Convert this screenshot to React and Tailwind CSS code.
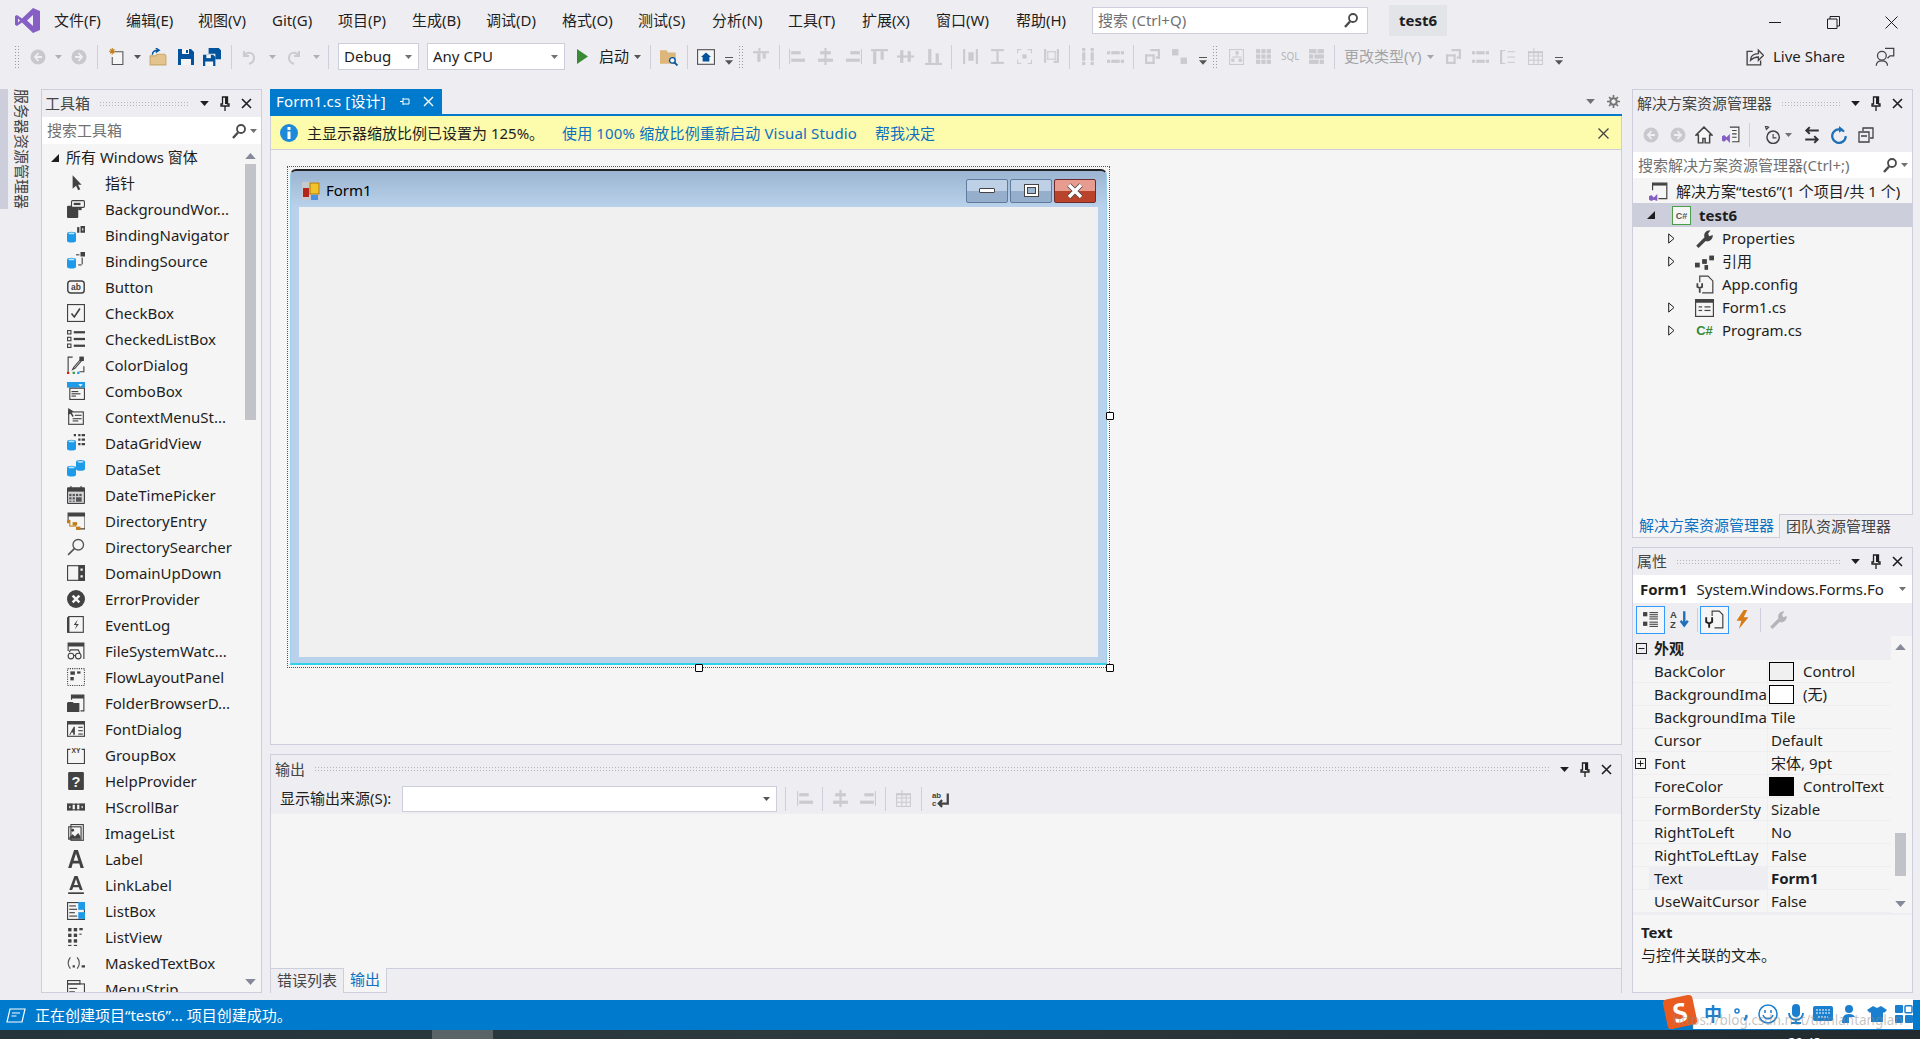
import React from "react";

// shared colours: bg #eeeef2, panel #f5f5f5, border #cccedb, accent #007acc
const DK = "#424242";
const BL = "#1e9be8";
const GR = "#cbcbcf";
const OR = "#c27d1a";

const Svg = ({ s = 18, children, className = "" }) => (
  <svg width={s} height={s} viewBox="0 0 16 16" className={`shrink-0 ${className}`}>
    {children}
  </svg>
);

const Rects = ({ r, fill = DK }) =>
  r.map(([x, y, w, h], i) => <rect key={i} x={x} y={y} width={w} height={h} fill={fill} />);

const Cyl = ({ x = 0, y = 6 }) => (
  <g transform={`translate(${x} ${y})`}>
    <path d="M0 1.6a4 1.6 0 0 1 8 0v6.4a4 1.6 0 0 1-8 0z" fill={BL} />
    <ellipse cx="4" cy="1.6" rx="2.8" ry="0.8" fill="#bfe3fa" />
  </g>
);

const Box = ({ x, y, w, h, c = DK, dash }) => (
  <rect x={x + 0.5} y={y + 0.5} width={w - 1} height={h - 1} fill="none" stroke={c} strokeDasharray={dash} />
);

// toolbox icons
const TOOLBOX_ICONS = {
  pointer: <path d="M5 1v12l3-2.6 2 4 1.8-.8-2-4H13z" fill={DK} />,
  worker: (
    <>
      <rect x="0" y="5" width="10" height="11" rx="1" fill={DK} />
      <rect x="4" y="0.5" width="11.5" height="6" rx="1" fill="#f5f5f5" stroke={DK} />
      <rect x="6" y="2.5" width="6" height="2" fill={DK} />
      <Rects r={[[10, 7, 3, 2]]} />
    </>
  ),
  bindnav: (
    <>
      <Cyl y={5} />
      <Rects r={[[9, 1, 2, 5], [12, 0, 4, 6]]} />
      <rect x="13.5" y="2" width="1" height="2" fill="#f5f5f5" />
    </>
  ),
  bindsrc: (
    <>
      <Cyl y={5} />
      <Rects r={[[12, 0, 4, 4], [8, 2, 3, 1], [13, 5, 1, 6], [10, 11, 3, 1]]} />
    </>
  ),
  button: (
    <>
      <rect x="0.7" y="2.7" width="14.6" height="10.6" rx="2.5" fill="none" stroke={DK} strokeWidth="1.3" />
      <text x="8" y="10.5" textAnchor="middle" fontSize="7.5" fontWeight="700" fill={DK} fontFamily="Liberation Sans, sans-serif">ab</text>
    </>
  ),
  checkbox: (
    <>
      <Box x={0} y={0} w={16} h={16} />
      <path d="M4 8.5l2.5 3L11.5 4" fill="none" stroke={DK} strokeWidth="1.5" />
    </>
  ),
  checkedlist: (
    <>
      <Box x={0} y={0} w={4} h={4} />
      <Box x={0} y={6} w={4} h={4} />
      <Box x={0} y={12} w={4} h={4} />
      <Rects r={[[6, 1, 10, 2], [6, 7, 10, 2], [6, 13, 10, 2]]} />
    </>
  ),
  color: (
    <>
      <path d="M5 1H1v13M15 9v5h-4" fill="none" stroke={DK} />
      <path d="M13 2l-7 8-1 2 2-1 7-8z" fill="#f5f5f5" stroke={DK} />
      <rect x="11" y="0.5" width="4" height="4" fill={DK} />
      <Rects r={[[0, 14, 2, 2]]} fill="#e51400" />
      <Rects r={[[5, 14, 2, 2]]} fill="#339933" />
      <Rects r={[[9, 14, 2, 2]]} fill={BL} />
    </>
  ),
  combo: (
    <>
      <rect x="0" y="0" width="16" height="5" fill={BL} />
      <path d="M10 2h4l-2 2z" fill="#fff" />
      <Box x={2} y={5} w={14} h={11} />
      <Rects r={[[4, 8, 6, 1], [4, 10, 8, 1], [4, 12, 4, 1]]} />
    </>
  ),
  context: (
    <>
      <Box x={1} y={3} w={14} h={12} />
      <path d="M1 0l5 3-2 1 2 3-1 1-2-3-2 1z" fill={DK} />
      <Rects r={[[7, 6, 6, 1], [5, 9, 8, 1], [5, 11, 5, 1]]} />
    </>
  ),
  grid: (
    <>
      <Cyl y={5} />
      <Rects r={[[6, 0, 2, 2], [10, 0, 2, 2], [13, 0, 3, 2], [10, 4, 2, 2], [13, 4, 3, 2], [10, 8, 2, 2], [13, 8, 3, 2]]} />
    </>
  ),
  dataset: (
    <>
      <Cyl x={8} y={0} />
      <Cyl x={0} y={5} />
    </>
  ),
  date: (
    <>
      <rect x="0" y="1" width="16" height="15" rx="1" fill={DK} />
      <rect x="1" y="5" width="14" height="10" fill="#d5d5d8" />
      <Rects r={[[3, 0, 1, 3], [12, 0, 1, 3]]} />
      <Rects r={[[2, 7, 2, 2], [5, 7, 2, 2], [8, 7, 2, 2], [11, 7, 2, 2], [2, 10, 2, 2], [5, 10, 2, 2], [2, 13, 2, 1], [5, 13, 2, 1], [8, 10, 5, 4]]} fill="#555" />
    </>
  ),
  direntry: (
    <>
      <path d="M1 8V1h15v14H9" fill="none" stroke={DK} />
      <rect x="1" y="1" width="15" height="3" fill={DK} />
      <Rects r={[[0, 7, 3, 3], [5, 9, 4, 3], [8, 13, 4, 3], [2, 10, 1, 3], [3, 12, 5, 1]]} fill={OR} />
    </>
  ),
  dirsearch: (
    <>
      <circle cx="10" cy="6" r="4.7" fill="none" stroke="#555" strokeWidth="1.2" />
      <path d="M6.5 9.5L1 15" stroke="#555" strokeWidth="1.5" />
    </>
  ),
  updown: (
    <>
      <Box x={0} y={1} w={16} h={14} />
      <rect x="10" y="1" width="6" height="14" fill={DK} />
      <Rects r={[[12, 4, 2, 2], [12, 10, 2, 2]]} fill="#f5f5f5" />
    </>
  ),
  error: (
    <>
      <circle cx="8" cy="8" r="8" fill={DK} />
      <path d="M5 5l6 6M11 5l-6 6" stroke="#f5f5f5" strokeWidth="2.2" />
    </>
  ),
  eventlog: (
    <>
      <rect x="1.5" y="0.5" width="13" height="14" fill="none" stroke={DK} />
      <Rects r={[[0, 1, 2, 14]]} />
      <path d="M9.5 3L6 8h2.5L7 12l3.5-5H8z" fill={DK} />
    </>
  ),
  watcher: (
    <>
      <path d="M1 8V1h14v14" fill="none" stroke={DK} />
      <rect x="1" y="1" width="14" height="3" fill={DK} />
      <circle cx="3.5" cy="12.5" r="2.5" fill="none" stroke={DK} />
      <circle cx="10" cy="12.5" r="2.5" fill="none" stroke={DK} />
      <path d="M6 12h1.5M2 9l1-2h7l1.5 3" fill="none" stroke={DK} />
    </>
  ),
  flow: (
    <>
      <Box x={0} y={0} w={16} h={16} dash="1 1" />
      <Rects r={[[3, 3, 4, 3], [9, 3, 3, 2], [3, 8, 3, 3]]} />
    </>
  ),
  folder: (
    <>
      <path d="M4 5V1h11v14h-3" fill="none" stroke={DK} />
      <rect x="4" y="1" width="11" height="3" fill={DK} />
      <path d="M0 8l1-1h4l1 1h5v8H0z" fill={DK} />
    </>
  ),
  font: (
    <>
      <Box x={0} y={1} w={16} h={14} />
      <rect x="0" y="1" width="16" height="3" fill={DK} />
      <path d="M2 13l4-7h1v7H5.500v-2H4l-1 2z" fill={DK} />
      <Rects r={[[10, 6, 4, 1], [10, 9, 4, 1], [10, 12, 4, 1]]} />
    </>
  ),
  group: (
    <>
      <path d="M3 3H.5v12.5h15V3H13" fill="none" stroke={DK} />
      <text x="8" y="6" textAnchor="middle" fontSize="6" fontWeight="700" fill={DK} fontFamily="Liberation Sans, sans-serif">XY</text>
    </>
  ),
  help: (
    <>
      <rect x="1" y="0" width="14" height="16" rx="1" fill={DK} />
      <text x="8" y="13" textAnchor="middle" fontSize="13" fontWeight="700" fill="#f5f5f5" fontFamily="Liberation Sans, sans-serif">?</text>
    </>
  ),
  hscroll: (
    <>
      <Box x={0} y={5} w={16} h={6} />
      <Rects r={[[0, 5, 5, 6], [11, 5, 5, 6], [7, 5, 2, 6]]} />
      <Rects r={[[2, 7, 1, 2], [13, 7, 1, 2]]} fill="#f5f5f5" />
    </>
  ),
  imagelist: (
    <>
      <Box x={3} y={0} w={12} h={15} />
      <Box x={1} y={2} w={12} h={12} />
      <path d="M2 12l3-3 2 2 3-3 2 3v2H2z" fill={DK} />
      <circle cx="5" cy="5.5" r="1.3" fill={DK} />
    </>
  ),
  label: <path d="M1 16L6.3 0h3.4L15 16h-3l-1.1-4H5.1L4 16zM5.9 9.5h4.2L8 3z" fill={DK} />,
  link: (
    <>
      <path d="M2 12.5L6.6 0h2.8L14 12.5h-2.6L10.5 10h-5l-.9 2.5zM6.2 8h3.6L8 2.600z" fill={DK} />
      <rect x="1" y="14.5" width="14" height="1.5" fill={DK} />
    </>
  ),
  listbox: (
    <>
      <Box x={0} y={0} w={16} h={16} />
      <Rects r={[[2, 3, 6, 1], [2, 6, 7, 1], [2, 9, 5, 1], [2, 12, 7, 1]]} />
      <Rects r={[[10, 0, 6, 7], [10, 9, 6, 6]]} fill={BL} />
    </>
  ),
  listview: <Rects r={[[1, 0, 3, 3], [6, 0, 3, 3], [11, 0, 3, 2], [1, 5, 3, 3], [6, 5, 3, 3], [11, 5, 2, 1], [1, 10, 3, 3], [6, 10, 3, 3], [1, 15, 3, 1], [6, 15, 3, 1]]} />,
  masked: (
    <>
      <path d="M3 3C0.500 6 0.500 10 3 13M9 3c2.500 3 2.500 7 0 10" fill="none" stroke="#555" strokeWidth="1.2" />
      <Rects r={[[5, 10, 2, 2], [13, 10, 3, 2]]} />
    </>
  ),
  menu: (
    <>
      <rect x="0.500" y="0.500" width="11" height="3" fill="none" stroke={DK} />
      <Box x={0} y={3} w={16} h={13} />
      <Rects r={[[2, 7, 7, 1], [2, 10, 5, 1]]} />
    </>
  ),
};

const TOOLBOX = [
  ["指针", "pointer"], ["BackgroundWor...", "worker"], ["BindingNavigator", "bindnav"], ["BindingSource", "bindsrc"],
  ["Button", "button"], ["CheckBox", "checkbox"], ["CheckedListBox", "checkedlist"], ["ColorDialog", "color"],
  ["ComboBox", "combo"], ["ContextMenuSt...", "context"], ["DataGridView", "grid"], ["DataSet", "dataset"],
  ["DateTimePicker", "date"], ["DirectoryEntry", "direntry"], ["DirectorySearcher", "dirsearch"], ["DomainUpDown", "updown"],
  ["ErrorProvider", "error"], ["EventLog", "eventlog"], ["FileSystemWatc...", "watcher"], ["FlowLayoutPanel", "flow"],
  ["FolderBrowserD...", "folder"], ["FontDialog", "font"], ["GroupBox", "group"], ["HelpProvider", "help"],
  ["HScrollBar", "hscroll"], ["ImageList", "imagelist"], ["Label", "label"], ["LinkLabel", "link"],
  ["ListBox", "listbox"], ["ListView", "listview"], ["MaskedTextBox", "masked"], ["MenuStrip", "menu"],
];

// disabled toolbar glyphs, all plain bars
const GRAY_ICONS = {
  alignTop: [[1, 3, 15, 2], [5, 5, 3, 8], [10, 5, 3, 5], [6, 0, 2, 3]],
  alignL: [[1, 1, 1, 14], [3, 3, 9, 3], [3, 10, 13, 3]],
  alignC: [[7, 0, 2, 16], [3, 3, 10, 3], [1, 10, 14, 3]],
  alignR: [[15, 1, 1, 14], [5, 3, 9, 3], [1, 10, 13, 3]],
  topA: [[0, 1, 16, 2], [2, 3, 3, 12], [9, 3, 3, 8]],
  midA: [[0, 7, 16, 2], [3, 2, 3, 12], [10, 3, 3, 10]],
  botA: [[0, 14, 16, 2], [3, 1, 3, 13], [10, 5, 3, 9]],
  spaceH: [[1, 1, 2, 14], [13, 1, 2, 14], [6, 4, 5, 8]],
  spaceV: [[2, 1, 12, 2], [2, 13, 12, 2], [7, 3, 2, 10]],
  fit: [[1, 1, 4, 1], [1, 1, 1, 4], [11, 1, 4, 1], [14, 1, 1, 4], [1, 14, 4, 1], [1, 11, 1, 4], [11, 14, 4, 1], [14, 11, 1, 4], [6, 6, 4, 4]],
  zoom: [[1, 1, 2, 13], [13, 1, 2, 13], [4, 3, 8, 1], [4, 10, 8, 1], [4, 3, 1, 8], [11, 3, 1, 8], [10, 12, 4, 2]],
  centerV: [[2, 0, 3, 3], [2, 4, 3, 8], [2, 13, 3, 3], [10, 0, 3, 3], [10, 4, 3, 8], [10, 13, 3, 3]],
  centerH: [[0, 3, 3, 3], [4, 3, 8, 3], [13, 3, 3, 3], [0, 11, 3, 3], [4, 11, 8, 3], [13, 11, 3, 3]],
  front: [[1, 6, 9, 2], [1, 13, 9, 2], [1, 6, 2, 9], [8, 6, 2, 9], [6, 1, 9, 2], [13, 1, 2, 9], [11, 8, 4, 2]],
  back: [[1, 1, 6, 6], [9, 9, 6, 6]],
  chart: [[1, 1, 14, 1], [1, 15, 14, 1], [1, 1, 1, 15], [14, 1, 1, 15], [7, 3, 3, 3], [3, 10, 3, 3], [10, 10, 3, 3], [8, 6, 1, 2], [4, 8, 9, 1]],
  dots: [[1, 1, 4, 4], [6, 1, 4, 4], [11, 1, 4, 4], [1, 6, 4, 4], [6, 6, 4, 4], [11, 6, 4, 4], [1, 11, 4, 4], [6, 11, 4, 4], [11, 11, 4, 4]],
  block: [[1, 1, 7, 4], [9, 1, 6, 4], [1, 6, 4, 4], [6, 6, 9, 4], [1, 11, 9, 4], [11, 11, 4, 4]],
  keyB: [[1, 2, 2, 13], [1, 2, 5, 1], [1, 14, 5, 1], [8, 3, 7, 1], [8, 8, 7, 1], [8, 13, 7, 1]],
  tbl: [[1, 3, 14, 2], [1, 7, 14, 1], [1, 11, 14, 1], [1, 15, 14, 1], [1, 3, 1, 12], [6, 3, 1, 12], [10, 3, 1, 12], [14, 3, 1, 12], [6, 0, 1, 3]],
};

const Gray = ({ n, className = "" }) => (
  <Svg s={17} className={className}>
    <Rects r={GRAY_ICONS[n]} fill={GR} />
  </Svg>
);

const Caret = ({ className = "", c = "#717171", w = 7 }) => (
  <svg width={w} height={Math.round((w * 4) / 7)} viewBox="0 0 7 4" className={`shrink-0 ${className}`}>
    <path d="M0 0h7L3.500 4z" fill={c} />
  </svg>
);

const Sep = ({ className = "" }) => <div className={`h-[24px] w-px shrink-0 bg-[#cccedb] ${className}`} />;

const VGrip = ({ className = "" }) => (
  <div className={`h-[24px] w-[6px] shrink-0 bg-[radial-gradient(#9a9aa0_0.7px,transparent_0.8px)] bg-[length:3px_3px] ${className}`} />
);

const HGrip = ({ className = "" }) => (
  <div className={`h-[6px] bg-[radial-gradient(#b5b6c0_0.7px,transparent_0.8px)] bg-[length:3px_3px] ${className}`} />
);

const Circ = ({ dir, className = "" }) => (
  <Svg s={16} className={className}>
    <circle cx="8" cy="8" r="7.500" fill="#c9c9cd" />
    <path d={dir === "l" ? "M8.500 4L5 8l3.500 4M5.500 8H12" : "M7.500 4L11 8l-3.500 4M10.500 8H4"} fill="none" stroke="#f0f0f2" strokeWidth="1.800" />
  </Svg>
);

const Mag = ({ className = "", s = 16 }) => (
  <Svg s={s} className={className}>
    <circle cx="10" cy="6" r="4" fill="none" stroke="#4a4a4a" strokeWidth="1.800" />
    <path d="M7 9.500L2 15" stroke="#4a4a4a" strokeWidth="2.400" />
  </Svg>
);

const PaneButtons = ({ className = "" }) => (
  <div className={`flex shrink-0 items-center pr-[2px] ${className}`}>
    <Caret c="#1e1e1e" w={9} className="mr-[11px]" />
    <svg width="10" height="15" viewBox="0 0 10 15" className="mr-[11px]">
      <path d="M2.500 1h5v7h1.500v2H1V8h1.500zM5 10v5" fill="none" stroke="#1e1e1e" strokeWidth="1.300" />
      <rect x="5" y="1" width="2.500" height="7" fill="#1e1e1e" />
    </svg>
    <svg width="11" height="11" viewBox="0 0 11 11">
      <path d="M1 1l9 9M10 1l-9 9" stroke="#1e1e1e" strokeWidth="1.600" />
    </svg>
  </div>
);

const MENU = [
  ["文件(F)", "w-[72px]"], ["编辑(E)", "w-[72px]"], ["视图(V)", "w-[74px]"], ["Git(G)", "w-[66px]"], ["项目(P)", "w-[74px]"],
  ["生成(B)", "w-[74px]"], ["调试(D)", "w-[76px]"], ["格式(O)", "w-[76px]"], ["测试(S)", "w-[74px]"], ["分析(N)", "w-[76px]"],
  ["工具(T)", "w-[74px]"], ["扩展(X)", "w-[74px]"], ["窗口(W)", "w-[80px]"], ["帮助(H)", "w-[76px]"],
];

const TitleBar = () => (
  <div className="flex h-[40px] items-center">
    <svg width="25" height="25" viewBox="0 0 25 25" className="ml-[15px] mr-[14px] shrink-0">
      <path d="M18 0l7 3v19l-7 3-11-10.500L2 18l-2-1.200V8L2 7l5 3.500zM18 7l-6 5.500 6 5.500z" fill="#865fc5" />
      <path d="M3 10.500v4l2-2z" fill="#eeeef2" />
    </svg>
    <nav className="flex w-[1038px] shrink-0">
      {MENU.map(([label, w]) => (
        <span key={label} className={`${w} shrink-0 text-[15px]`}>{label}</span>
      ))}
    </nav>
    <div className="flex h-[27px] w-[276px] shrink-0 items-center border border-[#cccedb] bg-white pl-[5px] pr-[8px] text-[15px] text-[#717171]">
      <span>搜索 (Ctrl+Q)</span>
      <Mag className="ml-auto" />
    </div>
    <div className="ml-[21px] flex h-[31px] w-[58px] items-center justify-center bg-[#e2e4e8] text-[15px] font-bold">test6</div>
    <div className="ml-auto flex items-center pr-[0px] pt-[4px]">
      <div className="flex h-[13px] w-[58px] items-center justify-center"><div className="h-px w-[12px] bg-[#1e1e1e]" /></div>
      <div className="flex h-[13px] w-[58px] items-center justify-center">
        <svg width="13" height="13" viewBox="0 0 13 13">
          <path d="M3 3V.5h9.500V10H10M.5 3h9.500v9.500H.5z" fill="none" stroke="#1e1e1e" />
        </svg>
      </div>
      <div className="flex h-[13px] w-[58px] items-center justify-center">
        <svg width="13" height="13" viewBox="0 0 13 13">
          <path d="M.5.500l12 12M12.500.500l-12 12" stroke="#1e1e1e" />
        </svg>
      </div>
    </div>
  </div>
);

const ToolBar = () => (
  <div className="flex h-[49px] items-start">
    <div className="flex h-[33px] w-full items-center">
      <VGrip className="ml-[14px]" />
      <Circ dir="l" className="ml-[10px]" />
      <Caret className="ml-[9px]" c="#b0b0b4" />
      <Circ dir="r" className="ml-[9px]" />
      <Sep className="ml-[10px]" />
      <Svg s={17} className="ml-[10px]">
        <path d="M6 3.500h8v12H4v-7" fill="#f5f5f5" stroke="#555" />
        <path d="M4 0v6M1 3h6M2 1l4 4M6 1L2 5" stroke="#c27d1a" />
      </Svg>
      <Caret className="ml-[9px]" c="#555" />
      <Svg s={18} className="ml-[8px]">
        <path d="M1 7h5l1-1.500h7l1 1.500v8H1z" fill="#e3c48f" stroke="#c9a86a" />
        <path d="M3 6c0-3 2-4 5-4M6 0l3 2-3 2" fill="none" stroke="#00539c" strokeWidth="1.300" />
      </Svg>
      <Svg s={16} className="ml-[11px]">
        <path d="M0 0h13l3 3v13H0z" fill="#00539c" />
        <rect x="4" y="0" width="7" height="5" fill="#f5f5f5" />
        <rect x="8" y="1" width="2" height="3" fill="#00539c" />
        <rect x="3" y="10" width="10" height="6" fill="#f5f5f5" />
      </Svg>
      <Svg s={18} className="ml-[9px]">
        <path d="M5 0h9l2 2v8h-5V5H5z" fill="#00539c" />
        <path d="M0 6h9l2 2v8H0z" fill="#00539c" />
        <rect x="3" y="6" width="4" height="3" fill="#f5f5f5" />
        <rect x="2" y="12" width="7" height="4" fill="#f5f5f5" />
      </Svg>
      <Sep className="ml-[10px]" />
      <Svg s={16} className="ml-[9px]">
        <path d="M3 2v5h5M3 7c3-5 10-4 10 2 0 3-2 5-5 6" fill="none" stroke={GR} strokeWidth="2" />
      </Svg>
      <Caret className="ml-[12px]" c="#b0b0b4" />
      <Svg s={16} className="ml-[10px]">
        <path d="M13 2v5H8M13 7C10 2 3 3 3 9c0 3 2 5 5 6" fill="none" stroke={GR} strokeWidth="2" />
      </Svg>
      <Caret className="ml-[11px]" c="#b0b0b4" />
      <Sep className="ml-[8px]" />
      <div className="ml-[9px] flex h-[27px] w-[81px] shrink-0 items-center justify-between border border-[#cccedb] bg-white pl-[5px] pr-[6px] text-[15px]">
        Debug
        <Caret />
      </div>
      <div className="ml-[8px] flex h-[27px] w-[138px] shrink-0 items-center justify-between border border-[#cccedb] bg-white pl-[5px] pr-[6px] text-[15px]">
        Any CPU
        <Caret />
      </div>
      <svg width="11" height="15" viewBox="0 0 11 15" className="ml-[12px] shrink-0">
        <path d="M0 0l11 7.500L0 15z" fill="#388a34" />
      </svg>
      <span className="ml-[11px] w-[31px] shrink-0 text-[15px]">启动</span>
      <Caret className="ml-[4px]" c="#555" />
      <Sep className="ml-[9px]" />
      <Svg s={18} className="ml-[9px]">
        <path d="M0 2h6l1 2h7v10H0z" fill="#dcb67a" />
        <circle cx="11" cy="11" r="2.500" fill="#f5f5f5" stroke="#00539c" strokeWidth="1.200" />
        <path d="M13 13l2.500 2.500" stroke="#00539c" strokeWidth="1.600" />
      </Svg>
      <Sep className="ml-[9px]" />
      <Svg s={18} className="ml-[9px]">
        <rect x="0.500" y="1.500" width="15" height="13" fill="#f5f5f5" stroke="#555" />
        <path d="M8 4L3.500 8H5v4h6V8h1.500z" fill="#00539c" />
      </Svg>
      <div className="ml-[10px] flex w-[8px] shrink-0 flex-col items-center gap-[2px] pt-[8px]">
        <div className="h-px w-[8px] bg-[#555]" />
        <Caret w={8} c="#555" />
      </div>
      <VGrip className="ml-[5px]" />
      <Gray n="alignTop" className="ml-[8px]" />
      <Sep className="ml-[10px]" />
      <Gray n="alignL" className="ml-[8px]" />
      <Gray n="alignC" className="ml-[12px]" />
      <Gray n="alignR" className="ml-[11px]" />
      <Gray n="topA" className="ml-[9px]" />
      <Gray n="midA" className="ml-[9px]" />
      <Gray n="botA" className="ml-[11px]" />
      <Sep className="ml-[9px]" />
      <Gray n="spaceH" className="ml-[10px]" />
      <Gray n="spaceV" className="ml-[10px]" />
      <Gray n="fit" className="ml-[10px]" />
      <Gray n="zoom" className="ml-[10px]" />
      <Sep className="ml-[9px]" />
      <Gray n="centerV" className="ml-[10px]" />
      <Gray n="centerH" className="ml-[10px]" />
      <Sep className="ml-[9px]" />
      <Gray n="front" className="ml-[10px]" />
      <Gray n="back" className="ml-[10px]" />
      <div className="ml-[11px] flex w-[8px] shrink-0 flex-col items-center gap-[2px] pt-[8px]">
        <div className="h-px w-[8px] bg-[#555]" />
        <Caret w={8} c="#555" />
      </div>
      <VGrip className="ml-[5px]" />
      <Gray n="chart" className="ml-[10px]" />
      <Gray n="dots" className="ml-[10px]" />
      <span className="ml-[9px] w-[17px] shrink-0 text-[10px] text-[#b5b5b8]">SQL</span>
      <Gray n="block" className="ml-[10px]" />
      <Sep className="ml-[9px]" />
      <span className="ml-[9px] w-[79px] shrink-0 text-[15px] text-[#a2a4a5]">更改类型(Y)</span>
      <Caret className="ml-[4px]" c="#a2a4a5" />
      <Gray n="front" className="ml-[11px]" />
      <Gray n="centerH" className="ml-[10px]" />
      <Gray n="keyB" className="ml-[10px]" />
      <Gray n="tbl" className="ml-[11px]" />
      <div className="ml-[11px] flex w-[8px] shrink-0 flex-col items-center gap-[2px] pt-[8px]">
        <div className="h-px w-[8px] bg-[#555]" />
        <Caret w={8} c="#555" />
      </div>
      <div className="ml-auto flex items-center">
        <Svg s={18}>
          <path d="M6 3H1v12h12v-4" fill="none" stroke="#424242" strokeWidth="1.200" />
          <path d="M4 11c0-4 3-6 7-6V2l4.500 4.500L11 11V8c-3 0-5 1-7 3z" fill="none" stroke="#424242" strokeWidth="1.200" />
        </Svg>
        <span className="ml-[9px] text-[15px]">Live Share</span>
        <Svg s={20} className="ml-[30px] mr-[25px]">
          <circle cx="5.500" cy="7" r="3.500" fill="none" stroke="#424242" />
          <path d="M1 15c0-3 2-4 4.500-4s4.500 1 4.500 4M8 1h7v6h-3l-2 2" fill="none" stroke="#424242" />
        </Svg>
      </div>
    </div>
  </div>
);

const LeftStrip = () => (
  <div className="flex w-[41px] shrink-0 items-start">
    <div className="h-[120px] w-[8px] bg-[#cccedb]" />
    <div className="ml-[6px] text-[15px] leading-[16px] text-[#444] [text-orientation:sideways] [writing-mode:vertical-rl]">服务器资源管理器</div>
  </div>
);

const Toolbox = () => (
  <aside className="relative flex h-[904px] w-[221px] shrink-0 flex-col overflow-hidden border border-[#cccedb] bg-[#f5f5f5]">
    <div className="flex h-[27px] shrink-0 items-center bg-[#eeeef2] pl-[3px] pr-[7px] text-[15px] text-[#444]">
      <span className="shrink-0">工具箱</span>
      <HGrip className="mx-[9px] w-[90px]" />
      <PaneButtons className="ml-auto" />
    </div>
    <div className="flex h-[27px] shrink-0 items-center bg-white pl-[5px] pr-[4px] text-[15px] text-[#717171]">
      <span>搜索工具箱</span>
      <Mag className="ml-auto mr-[3px]" />
      <Caret />
    </div>
    <div className="flex h-[26px] shrink-0 items-center pl-[9px] pt-[1px] text-[15px]">
      <svg width="8" height="8" viewBox="0 0 8 8" className="mr-[7px]"><path d="M8 0v8H0z" fill="#1e1e1e" /></svg>
      所有 Windows 窗体
    </div>
    <ul>
      {TOOLBOX.map(([label, icon]) => (
        <li key={label} className="flex h-[26px] items-center pl-[25px] text-[15px]">
          <Svg s={18}>{TOOLBOX_ICONS[icon]}</Svg>
          <span className="ml-[20px] whitespace-nowrap">{label}</span>
        </li>
      ))}
    </ul>
    {/* scrollbar sits over the list */}
    <div className="absolute right-[5px] top-[54px] bottom-0 flex w-[11px] flex-col items-center">
      <Caret className="mt-[9px] rotate-180" c="#868999" w={11} />
      <div className="mt-[5px] h-[256px] w-[11px] bg-[#c2c3c9]" />
      <Caret className="mt-auto mb-[7px]" c="#868999" w={11} />
    </div>
  </aside>
);

const WinButton = ({ className = "", children }) => (
  <div className={`flex h-[24px] items-center justify-center rounded-[2px] border border-[#5e7c9e] ${className}`}>{children}</div>
);

const Handle = ({ className }) => <div className={`absolute h-[8px] w-[8px] rounded-[1px] border border-black bg-white ${className}`} />;

const Designer = () => (
  <div className="flex-1 border-x border-b border-[#cccedb] bg-[#f5f5f5] pl-[16px] pt-[16px]">
    <div className="relative h-[502px] w-[823px] border border-dotted border-[#555] p-[2px]">
      <div className="flex h-[496px] w-[817px] flex-col rounded-t-[6px] border-t-2 border-x border-t-[#222] border-x-[#99d1ea] border-b-2 border-b-[#2fd3e8] bg-[linear-gradient(#9bb5d2_0,#b9d1ea_36px)] px-[8px]">
        <div className="flex h-[36px] shrink-0 items-center pt-[3px]">
          <svg width="18" height="18" viewBox="0 0 18 18" className="ml-[3px] shrink-0">
            <rect width="18" height="18" fill="#c6c9d0" />
            <rect x="8" y="1" width="9" height="11" fill="#f4c22b" stroke="#a87a10" />
            <rect x="1" y="6" width="6" height="9" fill="#b3261b" />
            <rect x="9" y="13" width="7" height="5" fill="#4a90e2" />
          </svg>
          <span className="ml-[6px] text-[15px] text-black">Form1</span>
          <WinButton className="ml-auto w-[42px] bg-[linear-gradient(#bdd0e6_50%,#95aecb_50%)]">
            <div className="h-[5px] w-[16px] rounded-[1px] border border-[#444] bg-white" />
          </WinButton>
          <WinButton className="ml-[2px] w-[42px] bg-[linear-gradient(#bdd0e6_50%,#95aecb_50%)]">
            <div className="flex h-[13px] w-[15px] items-center justify-center border border-[#444] bg-white">
              <div className="h-[7px] w-[9px] border border-[#444] bg-[#9db6d2]" />
            </div>
          </WinButton>
          <WinButton className="ml-[2px] mr-[2px] w-[42px] border-[#6e2a2a] bg-[linear-gradient(#e79c8f_50%,#b9442b_50%)]">
            <svg width="18" height="16" viewBox="0 0 18 16">
              <path d="M3 2l12 12M15 2L3 14" stroke="#444" strokeWidth="5" />
              <path d="M3 2l12 12M15 2L3 14" stroke="#fff" strokeWidth="3.500" />
            </svg>
          </WinButton>
        </div>
        <div className="h-[450px] w-[799px] shrink-0 bg-[#f0f0f0]" />
      </div>
      <Handle className="right-[-5px] top-[245px]" />
      <Handle className="bottom-[-5px] left-[407px]" />
      <Handle className="bottom-[-5px] right-[-5px]" />
    </div>
  </div>
);

const OutputPane = () => (
  <section className="flex h-[239px] shrink-0 flex-col border-x border-t border-[#cccedb] bg-[#eeeef2]">
    <div className="flex h-[28px] shrink-0 items-center pl-[4px] pr-[7px] text-[15px] text-[#444]">
      <span className="shrink-0">输出</span>
      <HGrip className="mx-[9px] flex-1" />
      <PaneButtons />
    </div>
    <div className="flex h-[31px] shrink-0 items-center pl-[9px] text-[15px]">
      <span className="w-[122px] shrink-0">显示输出来源(S):</span>
      <div className="flex h-[26px] w-[375px] shrink-0 items-center justify-end border border-[#cccedb] bg-white pr-[6px]">
        <Caret c="#555" />
      </div>
      <Sep className="ml-[8px]" />
      <Gray n="alignL" className="ml-[10px]" />
      <Sep className="ml-[9px]" />
      <Gray n="alignC" className="ml-[9px]" />
      <Gray n="alignR" className="ml-[10px]" />
      <Sep className="ml-[9px]" />
      <Gray n="tbl" className="ml-[9px]" />
      <Sep className="ml-[9px]" />
      <Svg s={18} className="ml-[10px]">
        <text x="0" y="7" fontSize="7" fontWeight="700" fill={DK} fontFamily="Liberation Sans, sans-serif">ab</text>
        <text x="0" y="14" fontSize="7" fontWeight="700" fill={DK} fontFamily="Liberation Sans, sans-serif">c</text>
        <path d="M14 3v9H7M9 9l-3 3 3 3" fill="none" stroke={DK} strokeWidth="2" />
      </Svg>
    </div>
    <div className="flex-1 bg-[#f5f5f5]" />
    <div className="flex h-[25px] shrink-0 bg-[#eeeef2] text-[15px]">
      <div className="flex-none border-t border-[#cccedb] pl-[6px] pr-[6px] text-[#444]">错误列表</div>
      <div className="w-[44px] shrink-0 border-x border-b border-[#cccedb] bg-[#f5f5f5] text-center text-[#0e70c0]">输出</div>
      <div className="flex-1 border-t border-[#cccedb]" />
    </div>
  </section>
);

const Editor = () => (
  <main className="ml-[8px] flex h-[904px] min-w-0 flex-1 flex-col">
    <div className="flex h-[25px] shrink-0 items-center">
      <div className="flex h-[25px] w-[172px] items-center bg-[#007acc] pl-[6px] text-[15px] text-white">
        <span className="tracking-[0.15px]">Form1.cs [设计]</span>
        <svg width="11" height="11" viewBox="0 0 11 11" className="ml-[13px]">
          <path d="M4 2v7M1 5.500h3M4 3h6v5H4" fill="none" stroke="#fff" />
        </svg>
        <svg width="11" height="11" viewBox="0 0 11 11" className="ml-[13px]">
          <path d="M1 1l9 9M10 1l-9 9" stroke="#fff" strokeWidth="1.400" />
        </svg>
      </div>
      <Caret className="ml-auto" w={9} c="#717171" />
      <Svg s={13} className="ml-[12px] mr-[2px]">
        <circle cx="8" cy="8" r="4" fill="none" stroke="#717171" strokeWidth="2.500" />
        <path d="M8 0v3M8 13v3M0 8h3M13 8h3M2.500 2.500l2 2M11.500 11.500l2 2M13.500 2.500l-2 2M4.500 11.500l-2 2" stroke="#717171" strokeWidth="2" />
      </Svg>
    </div>
    <div className="h-[2px] shrink-0 bg-[#007acc]" />
    <div className="flex h-[34px] shrink-0 items-center border-x border-b border-[#cccedb] bg-[#fdfbac] pl-[9px] pt-[1px] text-[15px]">
      <svg width="18" height="18" viewBox="0 0 18 18" className="shrink-0">
        <circle cx="9" cy="9" r="9" fill="#1e88d9" />
        <rect x="7.500" y="3" width="3" height="3" fill="#fff" />
        <rect x="7.500" y="7.500" width="3" height="7.500" fill="#fff" />
      </svg>
      <span className="ml-[9px] w-[255px] shrink-0">主显示器缩放比例已设置为 125%。</span>
      <span className="w-[313px] shrink-0 whitespace-nowrap tracking-[0.15px] text-[#0e70c0]">使用 100% 缩放比例重新启动 Visual Studio</span>
      <span className="text-[#0e70c0]">帮我决定</span>
      <svg width="11" height="11" viewBox="0 0 11 11" className="ml-auto mr-[12px]">
        <path d="M.5.500l10 10M10.500.500l-10 10" stroke="#444" strokeWidth="1.300" />
      </svg>
    </div>
    <Designer />
    <div className="h-[9px] shrink-0" />
    <OutputPane />
  </main>
);

const Arrow = () => (
  <svg width="7" height="11" viewBox="0 0 7 11" className="shrink-0">
    <path d="M.7.900L6 5.500.7 10.100z" fill="#f5f5f5" stroke="#1e1e1e" />
  </svg>
);

const TreeRow = ({ arrow, icon, children }) => (
  <div className="flex h-[23px] items-center pl-[35px] text-[15px]">
    <div className="mr-[20px] flex w-[7px] shrink-0">{arrow && <Arrow />}</div>
    {icon}
    <span className="ml-[8px] whitespace-nowrap">{children}</span>
  </div>
);

const ExplorerPane = () => (
  <section className="flex h-[449px] shrink-0 flex-col">
    <div className="flex h-[425px] flex-col border-x border-t border-[#cccedb] bg-[#f5f5f5]">
      <div className="flex h-[27px] shrink-0 items-center bg-[#eeeef2] pl-[4px] pr-[7px] text-[15px] text-[#444]">
        <span className="shrink-0">解决方案资源管理器</span>
        <HGrip className="mx-[9px] flex-1" />
        <PaneButtons />
      </div>
      <div className="flex h-[35px] shrink-0 items-center bg-[#eeeef2] pl-[10px]">
        <Circ dir="l" />
        <Circ dir="r" className="ml-[11px]" />
        <Svg s={18} className="ml-[9px]">
          <path d="M8 1L1 8h2v7h4v-4h2v4h4V8h2z" fill="#f5f5f5" stroke="#424242" strokeWidth="1.300" />
        </Svg>
        <Svg s={18} className="ml-[9px]">
          <path d="M7 1h8v13H9" fill="#f5f5f5" stroke="#424242" />
          <path d="M9 4h4M9 7h4M9 10h4" stroke="#424242" />
          <path d="M0 9l2-1 2 2 3-3v8l-3-3-2 2-2-1z" fill="#865fc5" />
        </Svg>
        <Sep className="ml-[9px]" />
        <Svg s={18} className="ml-[13px]">
          <circle cx="9" cy="10" r="5.500" fill="none" stroke="#424242" strokeWidth="1.300" />
          <path d="M9 7v3.500h3M2 0l3 1-2 2z" fill="none" stroke="#424242" />
        </Svg>
        <Caret className="ml-[4px]" />
        <Svg s={18} className="ml-[11px]">
          <path d="M14 4H3M6 1L3 4l3 3M2 12h11M10 9l3 3-3 3" fill="none" stroke="#333" strokeWidth="1.800" />
        </Svg>
        <Svg s={18} className="ml-[9px]">
          <path d="M12.500 5A6 6 0 1 0 14 9" fill="none" stroke="#1e6fb8" strokeWidth="2" />
          <path d="M8 0v6l4-3z" fill="#1e6fb8" />
        </Svg>
        <Svg s={16} className="ml-[10px]">
          <path d="M5 4V1h10v10h-3M1 5h10v10H1zM3 9h6" fill="none" stroke="#424242" strokeWidth="1.300" />
        </Svg>
      </div>
      <div className="flex h-[26px] shrink-0 items-center bg-white pl-[5px] pr-[4px] text-[15px] text-[#717171]">
        <span className="whitespace-nowrap">搜索解决方案资源管理器(Ctrl+;)</span>
        <Mag className="ml-auto mr-[3px]" />
        <Caret />
      </div>
      <div className="flex h-[25px] shrink-0 items-center pl-[16px] pt-[1px] text-[15px]">
        <Svg s={19}>
          <path d="M3 7V1h12v13H8" fill="#f5f5f5" stroke="#424242" />
          <rect x="3" y="1" width="12" height="2" fill="#424242" />
          <path d="M0 12l2-1 2 2 3-3v6l-3-1-2 1-2-1z" fill="#865fc5" />
        </Svg>
        <span className="ml-[8px] whitespace-nowrap">解决方案“test6”(1 个项目/共 1 个)</span>
      </div>
      <div className="flex h-[24px] shrink-0 items-center bg-[#cccedb] pl-[14px] text-[15px] font-bold">
        <svg width="8" height="8" viewBox="0 0 8 8" className="mr-[17px]"><path d="M8 0v8H0z" fill="#1e1e1e" /></svg>
        <svg width="19" height="19" viewBox="0 0 19 19" className="shrink-0">
          <rect x="0.500" y="0.500" width="18" height="18" fill="#f5f5f5" stroke="#4d9e4a" />
          <text x="9.500" y="13" textAnchor="middle" fontSize="9" fill="#555" fontFamily="Liberation Sans, sans-serif">C#</text>
        </svg>
        <span className="ml-[8px]">test6</span>
      </div>
      <TreeRow arrow icon={<Svg s={19}><path d="M1 14l7-7c-1-3 1-6 5-6l-2 3 1 2 3-1c0 4-3 6-6 5l-6 6z" fill="#424242" /></Svg>}>Properties</TreeRow>
      <TreeRow arrow icon={<Svg s={19}><Rects r={[[0, 9, 4, 4], [6, 6, 4, 4], [12, 3, 4, 4], [8, 11, 3, 4]]} /></Svg>}>引用</TreeRow>
      <TreeRow icon={<Svg s={19}><path d="M4 6V1h7l4 4v10H6" fill="#f5f5f5" stroke="#424242" /><path d="M2 7v3l2 1 2-1V7M4 11v4" fill="none" stroke="#424242" strokeWidth="1.500" /></Svg>}>App.config</TreeRow>
      <TreeRow arrow icon={<Svg s={19}><Box x={0} y={1} w={16} h={15} /><Rects r={[[0, 1, 16, 3], [3, 7, 3, 1], [8, 7, 5, 1], [3, 10, 3, 1], [8, 10, 5, 1]]} /></Svg>}>Form1.cs</TreeRow>
      <TreeRow arrow icon={<svg width="19" height="19" viewBox="0 0 19 19" className="shrink-0"><text x="9.500" y="14" textAnchor="middle" fontSize="13" fontWeight="700" fill="#388a34" fontFamily="Liberation Sans, sans-serif">C#</text></svg>}>Program.cs</TreeRow>
    </div>
    <div className="flex h-[24px] shrink-0 text-[15px]">
      <div className="w-[148px] shrink-0 border-x border-b border-[#cccedb] bg-[#f5f5f5] pl-[6px] text-[#0e70c0]">解决方案资源管理器</div>
      <div className="flex-1 border-t border-[#cccedb] pl-[6px] text-[#444]">团队资源管理器</div>
    </div>
  </section>
);

const PROPS = [
  { n: "BackColor", v: "Control", swatch: "bg-[#f0f0f0]" },
  { n: "BackgroundIma", v: "(无)", swatch: "bg-white" },
  { n: "BackgroundIma", v: "Tile" },
  { n: "Cursor", v: "Default" },
  { n: "Font", v: "宋体, 9pt", plus: true },
  { n: "ForeColor", v: "ControlText", swatch: "bg-black" },
  { n: "FormBorderSty", v: "Sizable" },
  { n: "RightToLeft", v: "No" },
  { n: "RightToLeftLay", v: "False" },
  { n: "Text", v: "Form1", bold: true },
  { n: "UseWaitCursor", v: "False" },
];

const ExpandBox = ({ minus }) => (
  <svg width="11" height="11" viewBox="0 0 11 11" className="shrink-0">
    <rect x="0.500" y="0.500" width="10" height="10" fill="none" stroke="#1e1e1e" />
    <path d={minus ? "M2.500 5.500h6" : "M2.500 5.500h6M5.500 2.500v6"} stroke="#1e1e1e" />
  </svg>
);

const PropertiesPane = () => (
  <section className="mt-[9px] flex h-[446px] shrink-0 flex-col border border-[#cccedb] bg-[#f5f5f5]">
    <div className="flex h-[27px] shrink-0 items-center bg-[#eeeef2] pl-[4px] pr-[7px] text-[15px] text-[#444]">
      <span className="shrink-0">属性</span>
      <HGrip className="mx-[9px] flex-1" />
      <PaneButtons />
    </div>
    <div className="flex h-[28px] shrink-0 items-center bg-white pl-[7px] pr-[6px] text-[15px]">
      <span className="font-bold">Form1</span>
      <span className="ml-[9px] whitespace-nowrap">System.Windows.Forms.Fo</span>
      <Caret className="ml-auto" />
    </div>
    <div className="flex h-[33px] shrink-0 items-center bg-[#eeeef2] pl-[3px]">
      <div className="flex h-[28px] w-[29px] items-center justify-center border border-[#3399ff] bg-[#f5f5f5]">
        <Svg s={17}><Rects r={[[1, 1, 4, 4], [1, 10, 4, 4], [7, 1, 8, 1], [7, 3, 8, 1], [7, 5, 8, 1], [7, 7, 8, 1], [7, 10, 8, 1], [7, 12, 8, 1], [7, 14, 8, 1]]} /></Svg>
      </div>
      <Svg s={19} className="ml-[5px]">
        <text x="0" y="7" fontSize="8" fontWeight="700" fill={DK} fontFamily="Liberation Sans, sans-serif">A</text>
        <text x="0" y="15" fontSize="8" fontWeight="700" fill={DK} fontFamily="Liberation Sans, sans-serif">Z</text>
        <path d="M12 1v12M9 9l3 4 3-4" fill="none" stroke="#1e6fb8" strokeWidth="2" />
      </Svg>
      <Sep className="ml-[8px]" />
      <div className="ml-[2px] flex h-[28px] w-[29px] items-center justify-center border border-[#3399ff] bg-[#f5f5f5]">
        <Svg s={19}>
          <path d="M6 5V1h6l3 3v11H8" fill="none" stroke="#424242" />
          <path d="M1 6v4l2.500 1.500L6 10V6M3.500 11v4" fill="none" stroke="#222" strokeWidth="1.600" />
        </Svg>
      </div>
      <Svg s={19} className="ml-[4px]">
        <path d="M9 0L3 9h4l-2 7 8-10H9l3-6z" fill="#d87a16" />
      </Svg>
      <Sep className="ml-[8px]" />
      <Svg s={19} className="ml-[8px]">
        <path d="M1 14l7-7c-1-3 1-6 5-6l-2 3 1 2 3-1c0 4-3 6-6 5l-6 6z" fill="#b5b5b8" />
      </Svg>
    </div>
    <div className="relative flex h-[277px] shrink-0 flex-col">
      <div className="flex h-[24px] w-[258px] shrink-0 items-center bg-[#eeeef2] pl-[3px] text-[15px] font-bold">
        <ExpandBox minus />
        <span className="ml-[7px]">外观</span>
      </div>
      {PROPS.map((p, i) => (
        <div key={i} className="flex h-[23px] w-[258px] shrink-0 border-b border-[#eeeef2] text-[15px]">
          <div className="flex w-[16px] shrink-0 items-center justify-center pr-[2px]">{p.plus && <ExpandBox />}</div>
          <div className={`w-[118px] shrink-0 overflow-hidden whitespace-nowrap pl-[5px] ${p.n === "Text" ? "bg-[#eeeef2]" : ""}`}>{p.n}</div>
          <div className={`flex min-w-0 flex-1 items-center whitespace-nowrap border-l border-[#eeeef2] pl-[3px] ${p.bold ? "font-bold" : ""}`}>
            {p.swatch && <div className={`mr-[9px] ml-[-2px] h-[19px] w-[25px] shrink-0 border border-black ${p.swatch}`} />}
            {p.v}
          </div>
        </div>
      ))}
      {/* property grid scrollbar */}
      <div className="absolute right-[6px] top-0 bottom-0 flex w-[11px] flex-col items-center">
        <Caret className="mt-[8px] rotate-180" c="#868999" w={11} />
        <div className="mt-[183px] h-[43px] w-[11px] bg-[#c2c3c9]" />
        <Caret className="mt-auto mb-[6px]" c="#868999" w={11} />
      </div>
    </div>
    <div className="border-t-2 border-[#eeeef2] pl-[8px] pt-[6px] text-[15px] leading-[23px]">
      <div className="font-bold">Text</div>
      <div>与控件关联的文本。</div>
    </div>
  </section>
);

const SogouBar = () => (
  <div className="absolute right-[7px] top-[-1px] flex h-[30px] w-[220px] items-center bg-white pl-[10px] text-[#1b7fd0]">
    <div className="absolute left-[-28px] top-[-2px] flex h-[30px] w-[30px] rotate-[-12deg] items-center justify-center rounded-[4px] bg-[#ea5b1f] text-[26px] font-bold leading-none text-white">S</div>
    <span className="ml-[1px] w-[24px] shrink-0 text-[18px] font-bold leading-none">中</span>
    <svg width="20" height="20" viewBox="0 0 20 20" className="ml-[4px] shrink-0"><circle cx="5" cy="7" r="2" fill="none" stroke="#1b7fd0" strokeWidth="1.500" /><path d="M14 11c1 2 0 4-2 5" fill="none" stroke="#1b7fd0" strokeWidth="2.500" /></svg>
    <svg width="20" height="20" viewBox="0 0 20 20" className="ml-[6px] shrink-0"><circle cx="10" cy="10" r="9" fill="none" stroke="#1b7fd0" strokeWidth="1.500" /><path d="M5 11c2 5 8 5 10 0M7 6v3M13 6v3" fill="none" stroke="#1b7fd0" strokeWidth="1.500" /></svg>
    <svg width="20" height="20" viewBox="0 0 20 20" className="ml-[8px] shrink-0"><rect x="6" y="0" width="8" height="13" rx="4" fill="#1b7fd0" /><path d="M3 9c0 9 14 9 14 0M10 15v4M5 19h10" fill="none" stroke="#1b7fd0" strokeWidth="1.800" /></svg>
    <svg width="20" height="18" viewBox="0 0 20 18" className="ml-[7px] shrink-0"><rect width="20" height="15" y="1" rx="2" fill="#1b7fd0" /><path d="M3 5h14M3 8h14M5 12h10" stroke="#fff" strokeDasharray="2 1" /></svg>
    <svg width="20" height="20" viewBox="0 0 20 20" className="ml-[7px] shrink-0"><circle cx="9" cy="5" r="4" fill="#1b7fd0" /><path d="M2 19c0-7 3-9 7-9 3 0 5 1 6 3H9v6z" fill="#1b7fd0" /></svg>
    <svg width="20" height="18" viewBox="0 0 20 18" className="ml-[7px] shrink-0"><path d="M6 1l4 2 4-2 6 4-3 3-1-1v10H4V7L3 8 0 5z" fill="#1b7fd0" /></svg>
    <svg width="18" height="18" viewBox="0 0 18 18" className="ml-[8px] shrink-0"><rect width="8" height="8" rx="1" fill="#1b7fd0" /><rect x="10" y="0.800" width="7" height="7" rx="1" fill="none" stroke="#1b7fd0" strokeWidth="1.500" /><rect y="10" width="8" height="8" rx="1" fill="#1b7fd0" /><rect x="10" y="10" width="8" height="8" rx="1" fill="#1b7fd0" /></svg>
    {/* blog watermark over the IME bar */}
    <span className="absolute left-[-20px] top-[12px] whitespace-nowrap text-[13.5px] leading-[18px] text-[#8a8a8a]/50">https://blog.csdn.net/tianlantanglan</span>
  </div>
);

export default function App() {
  return (
    <div className="flex h-[1039px] w-[1920px] flex-col overflow-hidden bg-[#eeeef2] font-['Noto_Sans','Noto_Sans_CJK_SC',sans-serif] text-[#1e1e1e]">
      <TitleBar />
      <ToolBar />
      <div className="flex h-[911px] shrink-0 pr-[7px]">
        <LeftStrip />
        <Toolbox />
        <Editor />
        <div className="ml-[10px] flex h-[904px] w-[281px] shrink-0 flex-col">
          <ExplorerPane />
          <PropertiesPane />
        </div>
      </div>
      <footer className="relative flex h-[30px] shrink-0 items-center bg-[#007acc] pl-[6px] text-[15px] text-white">
        <svg width="20" height="15" viewBox="0 0 20 15" className="shrink-0">
          <path d="M4 1h15l-3 13H1zM6 5h8M5.500 8h5" fill="none" stroke="#fff" strokeWidth="1.200" />
        </svg>
        <span className="ml-[9px]">正在创建项目“test6”... 项目创建成功。</span>
        <SogouBar />
      </footer>
      <div className="flex h-[9px] shrink-0 overflow-hidden bg-[linear-gradient(90deg,#25343b,#2c3a3e_40%,#222a2e)] pl-[432px]">
        <div className="h-[9px] w-[61px] bg-[#5a6365]" />
        <span className="ml-[1295px] mt-[6px] text-[13px] leading-[13px] text-white">20:43</span>
      </div>
    </div>
  );
}
